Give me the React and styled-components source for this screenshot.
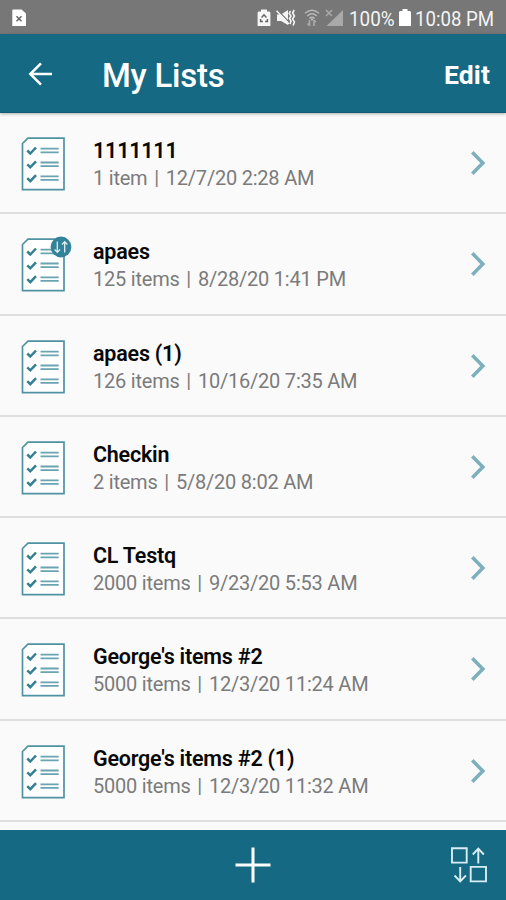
import React from "react";
import styled, { createGlobalStyle } from "styled-components";

const TEAL = "#166983";

const GlobalStyle = createGlobalStyle`
  * { box-sizing: border-box; }
  body { margin: 0; background: #fafafa; }
`;

const Screen = styled.div`
  width: 506px;
  height: 900px;
  display: flex;
  flex-direction: column;
  overflow: hidden;
  background: #fafafa;
  font-family: Roboto, "Liberation Sans", sans-serif;
`;

const StatusBar = styled.div`
  flex: none;
  height: 34px;
  display: flex;
  align-items: center;
  padding: 2px 11px 0 12px;
  background: #777;
  color: #f4f4f4;
`;

const StatusIcon = styled.svg`
  flex: none;
  display: block;
  width: ${(p) => p.$w}px;
  height: 18px;
  margin-left: ${(p) => p.$gap || 0}px;
`;

const Spacer = styled.div`
  flex: 1;
`;

const StatusText = styled.span`
  width: ${(p) => p.$w}px;
  margin-left: ${(p) => p.$gap}px;
  font-size: 20.5px;
  line-height: 24px;
  white-space: nowrap;
  transform: translateY(1px) scaleX(${(p) => p.$squeeze});
  transform-origin: left center;
`;

const Header = styled.header`
  flex: none;
  position: relative;
  height: 79px;
  display: flex;
  align-items: center;
  padding: 3px 16px 0 28px;
  background: ${TEAL};
  border-bottom: 1px solid #0f5c76;
  box-shadow: 0 1px 3px rgba(0, 0, 0, 0.3);
  color: #fff;
`;

const BackIcon = styled.svg`
  flex: none;
  width: 24px;
  height: 24px;
  margin-top: -2px;
`;

const Title = styled.h1`
  flex: 1;
  margin: 2px 0 0 50px;
  font-size: 33px;
  line-height: 40px;
  font-weight: 500;
  letter-spacing: -0.25px;
`;

const EditButton = styled.button`
  padding: 0;
  border: 0;
  background: none;
  color: #fff;
  font: 700 26.5px/32px Roboto, "Liberation Sans", sans-serif;
  letter-spacing: 0.1px;
`;

const List = styled.ul`
  flex: 1;
  min-height: 0;
  overflow: hidden;
  margin: 0;
  padding: 0;
  list-style: none;
`;

const Row = styled.li`
  height: 101.25px;
  display: flex;
  align-items: flex-start;
  padding: 0 20px 0 21px;
  border-bottom: 2px solid #dedede;
`;

const ListIcon = styled.svg`
  flex: none;
  width: 52px;
  height: 58px;
  margin-top: 22px;
`;

const RowText = styled.div`
  flex: 1;
  margin: 24px 0 0 20px;
  white-space: nowrap;
`;

const Name = styled.div`
  height: 27px;
  font-size: 21.5px;
  line-height: 28px;
  font-weight: 600;
  letter-spacing: -0.22px;
  color: #080808;
`;

const Detail = styled.div`
  height: 28px;
  font-size: 20px;
  line-height: 28px;
  letter-spacing: -0.22px;
  color: #7b7b7b;
`;

const Divider = styled.span`
  margin: 0 2.2px 0 2px;
`;

const Chevron = styled.svg`
  flex: none;
  width: 16px;
  height: 26px;
  margin-top: 37px;
`;

const Footer = styled.footer`
  flex: none;
  height: 70px;
  display: grid;
  grid-template-columns: 1fr auto 1fr;
  align-items: center;
  padding: 0 17px;
  background: ${TEAL};
`;

const PlusIcon = styled.svg`
  grid-column: 2;
  width: 36px;
  height: 36px;
`;

const SortIcon = styled.svg`
  justify-self: end;
  width: 38px;
  height: 38px;
  margin-right: 1px;
`;

const rows = [
  { name: "1111111", count: "1 item", date: "12/7/20 2:28 AM" },
  { name: "apaes", count: "125 items", date: "8/28/20 1:41 PM", synced: true },
  { name: "apaes (1)", count: "126 items", date: "10/16/20 7:35 AM" },
  { name: "Checkin", count: "2 items", date: "5/8/20 8:02 AM" },
  { name: "CL Testq", count: "2000 items", date: "9/23/20 5:53 AM" },
  { name: "George's items #2", count: "5000 items", date: "12/3/20 11:24 AM" },
  { name: "George's items #2 (1)", count: "5000 items", date: "12/3/20 11:32 AM" },
];

function Checklist({ synced }) {
  return (
    <ListIcon viewBox="0 0 52 58" fill="none">
      <path d="M7 3.2H43V54.7H1.5V8.5Z" fill="#fff" stroke="#5092a3" strokeWidth="1.7" />
      {[15.5, 29.3, 43.1].map((y) => (
        <React.Fragment key={y}>
          <path d={`M6.3 ${y}l3 3 5.7-6`} stroke="#347f93" strokeWidth="2.5" />
          <path d={`M19.5 ${y - 1.8}h18.2M19.5 ${y + 1.8}h18.2`} stroke="#6aa3b1" strokeWidth="1.8" />
        </React.Fragment>
      ))}
      {synced && (
        <>
          <circle cx="40" cy="11" r="10.4" fill="#32829a" />
          <path
            d="M36.3 5.4v10.8M33.6 13.5l2.7 2.9 2.7-2.9M43.7 16.6V5.8M41 8.5l2.7-2.9 2.7 2.9"
            stroke="#e3f0f3"
            strokeWidth="1.3"
          />
        </>
      )}
    </ListIcon>
  );
}

export default function App() {
  return (
    <>
      <GlobalStyle />
      <Screen>
        <StatusBar>
          <StatusIcon $w={14} viewBox="0 0 14 18">
            <path d="M1 0.5h8.5L14 4.5V17H0.3V1Z" fill="#fff" />
            <path d="M4.5 7.2l5 5M9.5 7.2l-5 5" stroke="#666" strokeWidth="1.5" />
          </StatusIcon>
          <Spacer />
          <StatusIcon $w={14} viewBox="0 0 14 18">
            <path d="M4 0.5h6v2h2.5l.9.9V17H.6V3.4l.9-.9H4Z" fill="#f6f6f6" />
            <path d="M4.6 8.6L7 5.8l2.4 2.8M10.4 10v2.6H8.2M3.6 10v2.6h2.2" fill="none" stroke="#666" strokeWidth="1.5" />
          </StatusIcon>
          <StatusIcon $w={20} $gap={5} viewBox="0 0 20 18">
            <path d="M1 5.5h4L12 1v15L5 12H1Z" fill="#f4f4f4" />
            <path d="M1.5 1l11.5 12" stroke="#777" strokeWidth="1.2" />
            <path d="M.5 1.8L13 15" stroke="#f4f4f4" strokeWidth="1.5" />
            <path d="M14.5 2l-1.3 2.5L15 7l-1.5 2.5L15 12l-1 3M18.2 1l-1.6 3L18.4 7l-1.8 3 1.8 3-1.3 3.5" fill="none" stroke="#f4f4f4" strokeWidth="1.6" />
          </StatusIcon>
          <StatusIcon $w={16} $gap={8} viewBox="0 0 16 18">
            <path d="M1 4.3Q8-2 15 4.3M3.3 7Q8 2.5 12.7 7M5.4 9.5Q8 7 10.6 9.5" fill="none" stroke="#b8b8b8" strokeWidth="1.4" />
            <path d="M6.3 9.5h3.4L8 12Z" fill="#c2c2c2" />
            <path d="M5.5 11v6M3.5 14.5l2 2.2M10 17v-6M12 13l-2-2" stroke="#a9a9a9" strokeWidth="1.7" />
          </StatusIcon>
          <StatusIcon $w={19} $gap={5} viewBox="0 0 19 18">
            <path d="M18 1v16H1.5Z" fill="#a9a9a9" />
            <path d="M1 1l6 6M7 1L1 7" stroke="#a9a9a9" strokeWidth="1.5" />
          </StatusIcon>
          <StatusText $w={47} $gap={5} $squeeze={0.92}>100%</StatusText>
          <StatusIcon $w={12} $gap={3} viewBox="0 0 12 18">
            <path d="M3.5 0h5v2H11l1 1v14H0V3l1-1h2.5Z" fill="#fff" />
          </StatusIcon>
          <StatusText $w={80} $gap={4} $squeeze={0.91}>10:08 PM</StatusText>
        </StatusBar>

        <Header>
          <BackIcon viewBox="0 0 24 24" fill="none" stroke="#fff" strokeWidth="2.5">
            <path d="M24 12H3M13 1.4L2.3 12 13 22.6" />
          </BackIcon>
          <Title>My Lists</Title>
          <EditButton>Edit</EditButton>
        </Header>

        <List>
          {rows.map((row) => (
            <Row key={row.name}>
              <Checklist synced={row.synced} />
              <RowText>
                <Name>{row.name}</Name>
                <Detail>
                  {row.count} <Divider>|</Divider> {row.date}
                </Detail>
              </RowText>
              <Chevron viewBox="0 0 16 26" fill="none">
                <path d="M2.3 2.3L12.8 13 2.3 23.7" stroke="#7db0ba" strokeWidth="3.6" />
              </Chevron>
            </Row>
          ))}
        </List>

        <Footer>
          <PlusIcon viewBox="0 0 36 36">
            <path d="M18 .5v35M.5 18h35" stroke="#fff" strokeWidth="3" />
          </PlusIcon>
          <SortIcon viewBox="0 0 38 38" fill="none" stroke="#d9edf5" strokeWidth="1.9">
            <path d="M2 2.2h14.7v14.4H2ZM20.7 20.9H36v14.5H20.7ZM28.3 17.5V3M22.8 8.5l5.5-5.8 5.5 5.8M10.2 21v14M4.5 29.5l5.7 5.8 5.7-5.8" />
          </SortIcon>
        </Footer>
      </Screen>
    </>
  );
}
